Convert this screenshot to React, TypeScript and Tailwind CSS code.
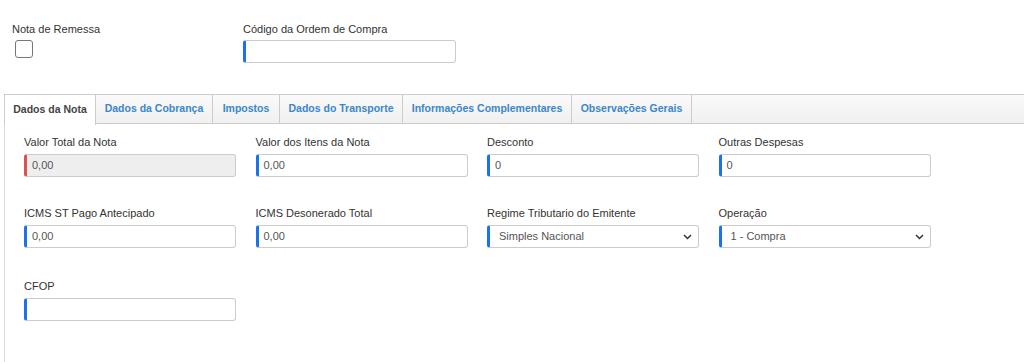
import React from "react";

const tabs = [
  { label: "Dados da Nota", w: "w-[92px]" },
  { label: "Dados da Cobrança", w: "w-[117px]" },
  { label: "Impostos", w: "w-[67px]" },
  { label: "Dados do Transporte", w: "w-[123px]" },
  { label: "Informações Complementares", w: "w-[169px]" },
  { label: "Observações Gerais", w: "w-[120px]" },
];

const Field = ({
  label,
  value,
  red,
  disabled,
  select,
}: {
  label: string;
  value?: string;
  red?: boolean;
  disabled?: boolean;
  select?: boolean;
}) => (
  <div className="w-[212px]">
    <p className="text-[11px] leading-[13px] text-[#333] mb-[5px]">{label}</p>
    <div
      className={`h-[23px] rounded-[3px] border border-[#ccc] border-l-[3px] flex items-center justify-between pl-[5px] pr-[6px] text-[11px] ${
        red ? "border-l-[#d9534f]" : "border-l-[#1a73e8]"
      } ${disabled ? "bg-[#eee] text-[#555]" : "bg-white text-[#555]"}`}
    >
      <span className={select ? "pl-[4px]" : ""}>{value}</span>
      {select && (
        <svg width="9" height="6" viewBox="0 0 9 6" className="text-[#333]">
          <path d="M1 1l3.5 3.5L8 1" fill="none" stroke="currentColor" strokeWidth="1.5" />
        </svg>
      )}
    </div>
  </div>
);

export default function App() {
  return (
    <div className="w-[1024px] h-[362px] bg-white overflow-hidden font-['Liberation_Sans',Arial,sans-serif]">
      <div className="flex pt-[23px] h-[94px]">
        <div className="ml-[12px] w-[231px]">
          <p className="text-[11px] leading-[13px] text-[#333] mb-[4px]">Nota de Remessa</p>
          <div className="ml-[3px] w-[18px] h-[18px] rounded-[3px] border border-[#777] bg-white" />
        </div>
        <div className="w-[213px]">
          <p className="text-[11px] leading-[13px] text-[#333] mb-[4px]">Código da Ordem de Compra</p>
          <div className="h-[23px] rounded-[3px] border border-[#ccc] border-l-[3px] border-l-[#1a73e8] bg-white" />
        </div>
      </div>
      <div className="ml-[4px]">
        <div className="flex h-[30px] border-t border-b border-[#ccc] bg-gradient-to-b from-[#fafafa] to-[#f0f0f0]">
          {tabs.map((t, i) => (
            <div
              key={t.label}
              className={`${t.w} flex items-center justify-center text-[10.5px] font-bold border-r border-[#ccc] whitespace-nowrap ${
                i === 0
                  ? "bg-white text-[#444] border-l -mb-px h-[30px]"
                  : "text-[#3a87c9]"
              }`}
            >
              {t.label}
            </div>
          ))}
        </div>
        <div className="border-l border-[#ddd] h-[240px] pl-[19px] pt-[12px]">
          <div className="flex gap-[19.5px]">
            <Field label="Valor Total da Nota" value="0,00" red disabled />
            <Field label="Valor dos Itens da Nota" value="0,00" />
            <Field label="Desconto" value="0" />
            <Field label="Outras Despesas" value="0" />
          </div>
          <div className="flex gap-[19.5px] mt-[30px]">
            <Field label="ICMS ST Pago Antecipado" value="0,00" />
            <Field label="ICMS Desonerado Total" value="0,00" />
            <Field label="Regime Tributario do Emitente" value="Simples Nacional" select />
            <Field label="Operação" value="1 - Compra" select />
          </div>
          <div className="flex gap-[19.5px] mt-[32px]">
            <Field label="CFOP" />
          </div>
        </div>
      </div>
    </div>
  );
}
